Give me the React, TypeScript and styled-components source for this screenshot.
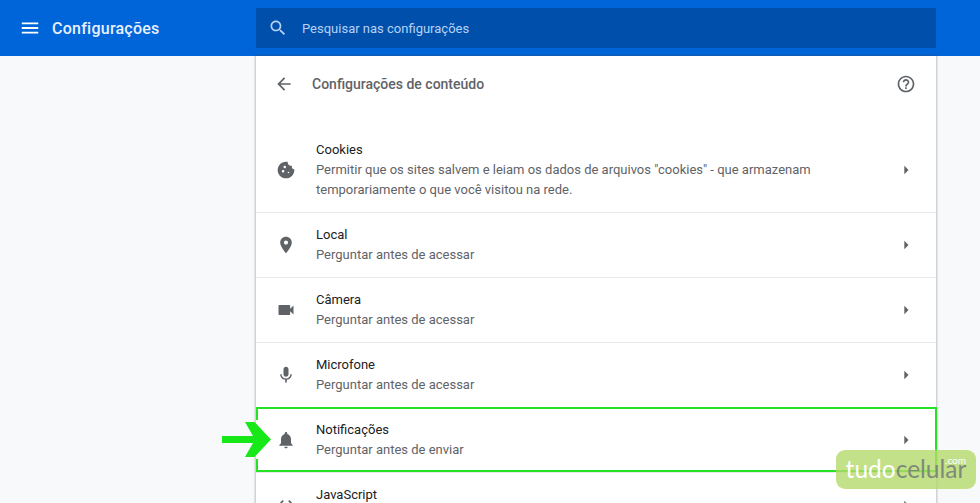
import React from "react";
import styled, { createGlobalStyle } from "styled-components";

const PATHS = {
  menu: "M3 18h18v-2H3v2zm0-5h18v-2H3v2zm0-7v2h18V6H3z",
  search:
    "M15.5 14h-.79l-.28-.27C15.41 12.59 16 11.11 16 9.5 16 5.91 13.09 3 9.5 3S3 5.91 3 9.5 5.91 16 9.5 16c1.61 0 3.09-.59 4.23-1.57l.27.28v.79l5 4.99L20.49 19l-4.99-5zm-6 0C7.01 14 5 11.99 5 9.5S7.01 5 9.5 5 14 7.01 14 9.5 11.99 14 9.5 14z",
  back: "M20 11H7.83l5.59-5.59L12 4l-8 8 8 8 1.41-1.41L7.83 13H20v-2z",
  help: "M11 18h2v-2h-2v2zm1-16C6.48 2 2 6.48 2 12s4.48 10 10 10 10-4.48 10-10S17.52 2 12 2zm0 18c-4.41 0-8-3.59-8-8s3.59-8 8-8 8 3.59 8 8-3.59 8-8 8zm0-14c-2.21 0-4 1.79-4 4h2c0-1.1.9-2 2-2s2 .9 2 2c0 2-3 1.75-3 5h2c0-2.25 3-2.5 3-5 0-2.21-1.79-4-4-4z",
  cookie:
    "M21.95 10.99c-1.79-.03-3.7-1.95-2.68-4.22-2.97 1-5.78-1.59-5.19-4.56C7.11.74 2 6.41 2 12c0 5.52 4.48 10 10 10 5.89 0 10.54-5.08 9.95-11.01zM8.5 15c-.83 0-1.5-.67-1.5-1.5S7.67 12 8.5 12s1.5.67 1.5 1.5S9.33 15 8.5 15zm2-5C9.67 10 9 9.33 9 8.5S9.67 7 10.5 7s1.5.67 1.5 1.5-.67 1.5-1.5 1.5zm4.5 6c-.55 0-1-.45-1-1s.45-1 1-1 1 .45 1 1-.45 1-1 1z",
  place:
    "M12 2C8.13 2 5 5.13 5 9c0 5.25 7 13 7 13s7-7.75 7-13c0-3.87-3.13-7-7-7zm0 9.5c-1.38 0-2.5-1.12-2.5-2.5s1.12-2.5 2.5-2.5 2.5 1.12 2.5 2.5-1.12 2.5-2.5 2.5z",
  video:
    "M17 10.5V7c0-.55-.45-1-1-1H4c-.55 0-1 .45-1 1v10c0 .55.45 1 1 1h12c.55 0 1-.45 1-1v-3.5l4 4v-11l-4 4z",
  mic: "M12 14c1.66 0 2.99-1.34 2.99-3L15 5c0-1.66-1.34-3-3-3S9 3.34 9 5v6c0 1.66 1.34 3 3 3zm5.3-3c0 3-2.54 5.1-5.3 5.1S6.7 14 6.7 11H5c0 3.41 2.72 6.23 6 6.72V21h2v-3.28c3.28-.48 6-3.3 6-6.72h-1.7z",
  bell: "M12 22c1.1 0 2-.9 2-2h-4c0 1.1.89 2 2 2zm6-6v-5c0-3.07-1.64-5.64-4.5-6.32V4c0-.83-.67-1.5-1.5-1.5s-1.5.67-1.5 1.5v.68C7.63 5.36 6 7.92 6 11v5l-2 2v1h16v-1l-2-2z",
  code: "M9.4 16.6L4.8 12l4.6-4.6L8 6l-6 6 6 6 1.4-1.4zm5.2 0l4.6-4.6-4.6-4.6L16 6l6 6-6 6-1.4-1.4z",
  arrowRight: "M10 17l5-5-5-5v10z",
};

type IconName = keyof typeof PATHS;

const GlobalStyle = createGlobalStyle`
  html, body {
    margin: 0;
    padding: 0;
    background: #f8f9fa;
    font-family: Roboto, "Liberation Sans", sans-serif;
  }
`;

const Page = styled.div`
  position: relative;
  width: 980px;
  height: 503px;
  overflow: hidden;
`;

const Toolbar = styled.header`
  display: flex;
  align-items: center;
  height: 56px;
  background: #0065d9;
  color: #fff;
`;

const ToolbarLeft = styled.div`
  display: flex;
  align-items: center;
  gap: 11px;
  width: 256px;
  padding-left: 19px;
  box-sizing: border-box;
`;

const ToolbarTitle = styled.h1`
  margin: 0;
  font-size: 16px;
  font-weight: 500;
  letter-spacing: 0.25px;
  color: #e8f0fe;
`;

const SearchBox = styled.div`
  display: flex;
  align-items: center;
  gap: 14px;
  width: 680px;
  height: 40px;
  padding-left: 12px;
  box-sizing: border-box;
  background: #0050ab;
  color: #b6d0f7;
  font-size: 13px;
`;

const Card = styled.main`
  width: 680px;
  margin-left: 256px;
  background: #fff;
  box-shadow: 0 0 2px 1px rgba(60, 64, 67, 0.3);
  min-height: 600px;
`;

const CardHeader = styled.div`
  display: flex;
  align-items: center;
  height: 56px;
  padding: 0 20px 0 18px;
  margin-bottom: 21px;
  color: #5f6368;
`;

const CardTitle = styled.h2`
  flex: 1;
  margin: 0 0 0 18px;
  font-size: 14px;
  font-weight: 500;
  color: #5f6368;
`;

const Row = styled.div<{ $first?: boolean }>`
  position: relative;
  display: flex;
  align-items: center;
  gap: 20px;
  padding: ${({ $first }) => ($first ? "7px 20px 12px" : "12px 20px")};
  border-bottom: 1px solid #e8eaed;
  color: #5f6368;
`;

const RowText = styled.div`
  flex: 1;
  min-height: 40px;
  font-size: 13px;
  line-height: 20px;
`;

const RowLabel = styled.div`
  color: #202124;
`;

const RowSub = styled.div`
  color: #5f6368;
`;

const Highlight = styled.div`
  position: absolute;
  left: 0;
  right: -1px;
  top: -1px;
  bottom: 0;
  border: 2px solid #24e324;
  border-left: none;
  pointer-events: none;

  &::before,
  &::after {
    content: "";
    position: absolute;
    left: 0;
    width: 2px;
    height: 11px;
    background: #24e324;
  }
  &::before {
    top: 0;
  }
  &::after {
    bottom: 0;
  }
`;

const PointerArrow = styled.svg`
  position: absolute;
  left: -34px;
  top: 14px;
`;

const Watermark = styled.div`
  position: absolute;
  left: 836px;
  top: 450px;
  width: 140px;
  height: 39px;
  border-radius: 9px;
  background: rgba(178, 216, 104, 0.78);
  font-family: Lato, sans-serif;
  font-size: 24.5px;
  font-weight: 400;
  line-height: 37px;
  text-align: center;
  color: #fff;
`;

const WatermarkGrey = styled.span`
  color: #7f8a78;
`;

const WatermarkCom = styled.span`
  position: absolute;
  right: 10px;
  top: 5px;
  font-size: 10px;
  line-height: 10px;
`;

const IconSvg = styled.svg`
  display: block;
  flex: none;
  fill: currentColor;
`;

const Icon = ({ name, size = 20 }: { name: IconName; size?: number }) => (
  <IconSvg width={size} height={size} viewBox="0 0 24 24">
    <path fillRule="evenodd" d={PATHS[name]} />
  </IconSvg>
);

const rows: { icon: IconName; label: string; sub?: React.ReactNode; marked?: boolean }[] = [
  {
    icon: "cookie",
    label: "Cookies",
    sub: (
      <>
        Permitir que os sites salvem e leiam os dados de arquivos "cookies" - que armazenam
        <br />
        temporariamente o que você visitou na rede.
      </>
    ),
  },
  { icon: "place", label: "Local", sub: "Perguntar antes de acessar" },
  { icon: "video", label: "Câmera", sub: "Perguntar antes de acessar" },
  { icon: "mic", label: "Microfone", sub: "Perguntar antes de acessar" },
  { icon: "bell", label: "Notificações", sub: "Perguntar antes de enviar", marked: true },
  { icon: "code", label: "JavaScript" },
];

export default function App() {
  return (
    <Page>
      <GlobalStyle />
      <Toolbar>
        <ToolbarLeft>
          <Icon name="menu" size={22} />
          <ToolbarTitle>Configurações</ToolbarTitle>
        </ToolbarLeft>
        <SearchBox>
          <Icon name="search" />
          Pesquisar nas configurações
        </SearchBox>
      </Toolbar>
      <Card>
        <CardHeader>
          <Icon name="back" />
          <CardTitle>Configurações de conteúdo</CardTitle>
          <Icon name="help" />
        </CardHeader>
        {rows.map((row, index) => (
          <Row key={row.label} $first={index === 0}>
            <Icon name={row.icon} />
            <RowText>
              <RowLabel>{row.label}</RowLabel>
              {row.sub && <RowSub>{row.sub}</RowSub>}
            </RowText>
            <Icon name="arrowRight" />
            {row.marked && (
              <>
                <Highlight />
                <PointerArrow width="50" height="36" viewBox="0 0 50 36">
                  <path
                    fill="#17e817"
                    d="M0 14h31L23 0h9.5L49 17.5 32.5 35H23l8-14H0z"
                  />
                </PointerArrow>
              </>
            )}
          </Row>
        ))}
      </Card>
      <Watermark>
        tudo<WatermarkGrey>celular</WatermarkGrey>
        <WatermarkCom>.com</WatermarkCom>
      </Watermark>
    </Page>
  );
}
